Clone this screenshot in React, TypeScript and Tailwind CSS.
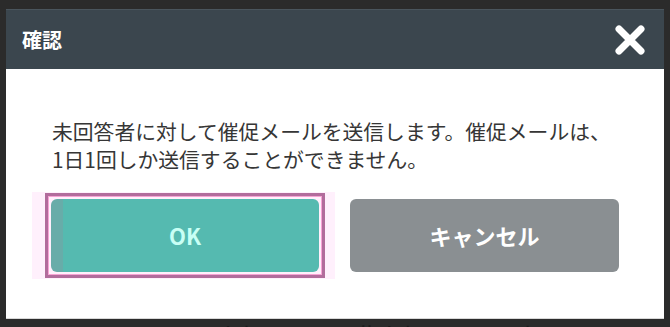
import React from 'react';

const FONT = '"Noto Sans CJK JP", "Noto Sans", sans-serif';

function CloseIcon() {
  return (
    <svg width="32" height="30" viewBox="0 0 32 30" aria-hidden="true">
      <path
        d="M5 4 L27 26 M27 4 L5 26"
        stroke="#ffffff"
        strokeWidth="7"
        strokeLinecap="round"
        fill="none"
      />
    </svg>
  );
}

export default function App() {
  return (
    <div
      className="h-[327px] w-[670px] overflow-hidden bg-[#2b2b2b] pt-[9px] pl-[6px]"
      style={{ fontFamily: FONT }}
    >
      {/* Modal */}
      <div className="w-[658px] bg-white shadow-[0_1px_0_#d8d8d8]">
        <div className="flex h-[60px] items-center justify-between border-t border-[#4a555d] bg-[#3b464e] pl-[16px] pr-[18px]">
          <h2 className="text-[20px] font-bold leading-none text-white">確認</h2>
          <button className="flex items-center">
            <CloseIcon />
          </button>
        </div>

        <div className="px-[45px] pt-[48px] pb-[46px]">
          <p className="pl-[1px] text-[20.8px] leading-[28px] text-[#363636]">
            未回答者に対して催促メールを送信します。催促メールは、
            <br />
            1日1回しか送信することができません。
          </p>

          <div className="mt-[26px] grid grid-cols-2 gap-[30px]">
            <div className="-my-[7px] -ml-[19px] -mr-[15px] bg-[#fff0fc] pt-[1px] pb-[1px] pl-[13px] pr-[10px]">
              <div className="border-[3px] border-[#b26c9c]">
                <div className="border border-[#f7a3d5] p-[2px]">
                  <button className="flex h-[73px] w-full items-center justify-center rounded-[6px] bg-[linear-gradient(to_right,#68aca9_12px,#55bab0_12px)] text-[22px] font-bold text-[#c8fff5]">
                    OK
                  </button>
                </div>
              </div>
            </div>
            <button className="flex h-[73px] items-center justify-center rounded-[6px] bg-[#8a8f92] text-[22px] font-bold text-white">
              キャンセル
            </button>
          </div>
        </div>
      </div>

      <div className="mt-[4px] pl-[158px] text-[22px] leading-none text-[#1c1c1c]">
        Copyright © 2020 All rights reserved.
      </div>
    </div>
  );
}
